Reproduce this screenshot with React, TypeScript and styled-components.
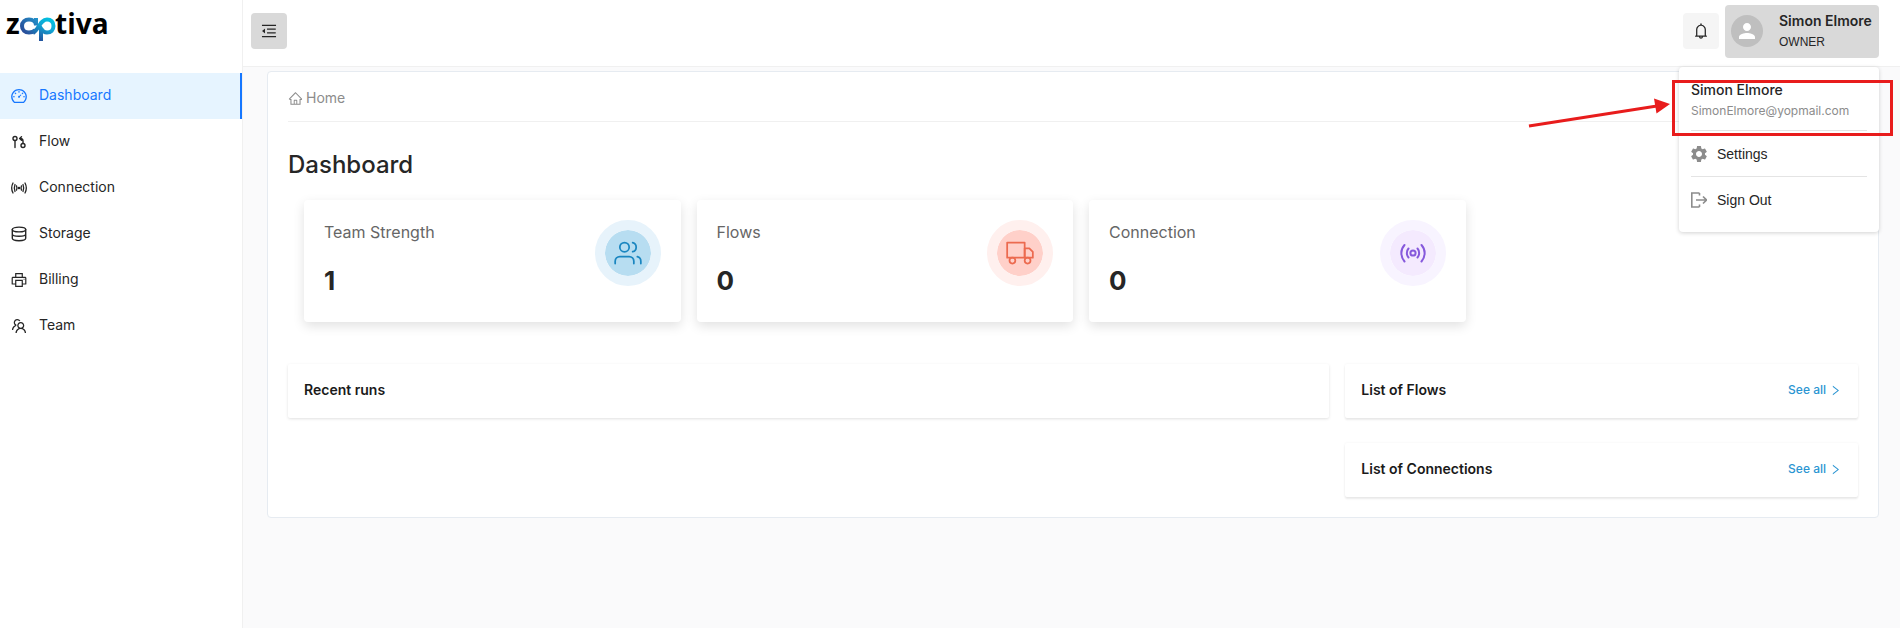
import React from 'react';
import styled, { createGlobalStyle, css } from 'styled-components';
import {
  AiOutlineBell,
  AiOutlineDashboard,
  AiOutlineHome,
  AiOutlineMenuFold,
  AiOutlinePrinter,
  AiOutlineRight,
  AiOutlineTeam,
} from 'react-icons/ai';
import { FiTruck, FiUsers } from 'react-icons/fi';
import { MdPerson, MdSettings } from 'react-icons/md';

const sans = `Inter, 'Liberation Sans', sans-serif`;
const arial = `'Liberation Sans', Arial, sans-serif`;

const GlobalStyle = createGlobalStyle`
  *, *::before, *::after { box-sizing: border-box; }
  body { margin: 0; background: #fafafb; color: #262626; font: 14px/22px ${sans}; }
  h1, h2, p, ul { margin: 0; padding: 0; }
  ul { list-style: none; }
  a { color: inherit; text-decoration: none; }
  button { font: inherit; color: inherit; border: 0; padding: 0; cursor: pointer; }
  svg { display: block; flex: none; }
`;

const Page = styled.div`
  display: flex;
  min-height: 100vh;
`;

const Sidebar = styled.aside`
  flex: none;
  width: 243px;
  background: #fff;
  border-right: 1px solid #f0f0f0;
`;

const Brand = styled.a`
  display: block;
  height: 73px;
`;

const NavLink = styled.a<{ $active?: boolean }>`
  display: flex;
  align-items: center;
  gap: 12px;
  height: 46px;
  padding-left: 11px;
  ${({ $active }) =>
    $active &&
    css`
      color: #1677ff;
      background: #e6f4ff;
      border-right: 2px solid #1677ff;
    `}
`;

const IconSlot = styled.span`
  display: flex;
  align-items: center;
  justify-content: center;
  flex: none;
  width: 16px;
  height: 16px;
`;

const NavText = styled.span`
  padding-bottom: 2px;
`;

const Body = styled.div`
  flex: 1;
  min-width: 0;
`;

const Header = styled.header`
  display: flex;
  align-items: flex-start;
  justify-content: space-between;
  height: 67px;
  padding: 5px 21px 0 8px;
  background: #fff;
  border-bottom: 1px solid #f0f0f0;
`;

const HeaderTools = styled.div`
  display: flex;
  gap: 6px;
`;

const IconButton = styled.button<{ $tone: string }>`
  display: flex;
  align-items: center;
  justify-content: center;
  width: 36px;
  height: 36px;
  margin-top: 8px;
  border-radius: 4px;
  background: ${({ $tone }) => $tone};
`;

const Account = styled.div`
  position: relative;
`;

const ProfileButton = styled.button`
  display: flex;
  align-items: center;
  gap: 16px;
  width: 154px;
  height: 53px;
  padding: 0 6px 1px;
  border-radius: 4px;
  background: #d9d9d9;
  text-align: left;
  white-space: nowrap;
`;

const Avatar = styled.span`
  display: flex;
  align-items: center;
  justify-content: center;
  width: 32px;
  height: 32px;
  border-radius: 50%;
  background: #bfbfbf;
  color: #fff;
`;

const ProfileText = styled.span`
  display: flex;
  flex-direction: column;
  gap: 1px;
`;

const ProfileName = styled.strong`
  font: 600 14px/20px ${sans};
`;

const ProfileRole = styled.span`
  font: 12px/20px ${arial};
`;

const Menu = styled.div`
  position: absolute;
  z-index: 2;
  top: 62px;
  right: 0;
  width: 200px;
  height: 165px;
  padding: 12px;
  background: #fff;
  border-radius: 4px;
  box-shadow: 0 1px 4px rgba(0, 0, 0, 0.18);
`;

const MenuUser = styled.div`
  height: 51px;
`;

const MenuName = styled.p`
  font-weight: 500;
  line-height: 22px;
`;

const MenuMail = styled.p`
  font-size: 12px;
  line-height: 20px;
  color: #8c8c8c;
`;

const MenuItem = styled.button`
  display: flex;
  align-items: center;
  gap: 10px;
  width: 100%;
  height: 46px;
  background: none;
  border-top: 1px solid #e4e4e4;
  font: 14px/22px ${arial};

  svg {
    color: #8c8c8c;
  }
`;

const Callout = styled.svg`
  position: absolute;
  z-index: 3;
  top: 70px;
  right: -16px;
  pointer-events: none;
`;

const Main = styled.main`
  padding: 4px 21px 0 24px;
`;

const Panel = styled.section`
  padding: 0 20px 20px;
  background: #fff;
  border: 1px solid #e6ebf1;
  border-radius: 4px;
`;

const Breadcrumb = styled.nav`
  display: flex;
  height: 50px;
  padding-top: 3px;
  border-bottom: 1px solid #f0f0f0;
  color: #8c8c8c;

  a {
    display: flex;
    align-items: center;
    gap: 3px;
  }
`;

const Title = styled.h1`
  padding: 27px 0 19px;
  font-size: 24px;
  line-height: 32px;
  font-weight: 500;
`;

const Stats = styled.div`
  display: grid;
  grid-template-columns: repeat(4, minmax(0, 1fr));
  gap: 16px;
  padding-left: 16px;
`;

const StatCard = styled.article`
  display: flex;
  justify-content: space-between;
  align-items: flex-start;
  height: 122px;
  padding: 20px;
  background: #fff;
  border-radius: 4px;
  box-shadow: 0 4px 12px rgba(0, 0, 0, 0.12);
`;

const StatLabel = styled.h2`
  font-size: 16px;
  line-height: 24px;
  font-weight: 400;
  color: #666;
`;

const StatValue = styled.p`
  margin-top: 21px;
  font-size: 26px;
  line-height: 32px;
  font-weight: 700;
`;

const StatIcon = styled.span<{ $ring: string; $fill: string; $ink: string }>`
  display: flex;
  align-items: center;
  justify-content: center;
  width: 66px;
  height: 66px;
  border: 10px solid ${({ $ring }) => $ring};
  border-radius: 50%;
  background: ${({ $fill }) => $fill};
  background-clip: padding-box;
  color: ${({ $ink }) => $ink};
`;

const Lists = styled.div`
  display: grid;
  grid-template-columns: repeat(3, minmax(0, 1fr));
  gap: 16px;
  align-items: start;
  margin-top: 42px;
`;

const WideColumn = styled.div`
  grid-column: span 2;
`;

const Column = styled.div`
  display: flex;
  flex-direction: column;
  gap: 25px;
`;

const ListCard = styled.section<{ $raised?: boolean }>`
  display: flex;
  align-items: center;
  justify-content: space-between;
  height: 54px;
  padding: 0 16px 2px;
  background: #fff;
  border-radius: 2px;
  box-shadow: ${({ $raised }) =>
    $raised
      ? '0 2px 2px rgba(0, 0, 0, 0.08), 0 0 3px rgba(0, 0, 0, 0.05)'
      : '0 1px 3px rgba(0, 0, 0, 0.12)'};
`;

const ListTitle = styled.h2`
  font-size: 14px;
  line-height: 22px;
  font-weight: 600;
  color: #1a1a1a;
`;

const SeeAll = styled.a`
  display: flex;
  align-items: center;
  gap: 3px;
  font-size: 12px;
  line-height: 20px;
  font-weight: 500;
  color: #2b95d2;
`;

const stroke = {
  fill: 'none',
  stroke: 'currentColor',
  strokeLinecap: 'round' as const,
  strokeLinejoin: 'round' as const,
};

const Logo = () => (
  <svg width="120" height="48" role="img" aria-label="zaptiva">
    <defs>
      <linearGradient id="loopA" x1="20" y1="34" x2="38" y2="18" gradientUnits="userSpaceOnUse">
        <stop offset="0" stopColor="#2a3f8f" />
        <stop offset="1" stopColor="#2295cc" />
      </linearGradient>
      <linearGradient id="loopP" x1="38" y1="40" x2="50" y2="18" gradientUnits="userSpaceOnUse">
        <stop offset="0" stopColor="#24509c" />
        <stop offset="0.6" stopColor="#12a5d4" />
        <stop offset="1" stopColor="#00c2e0" />
      </linearGradient>
    </defs>
    <g fontFamily="'Open Sans', sans-serif" fontWeight="700" fontSize="28" fill="#000">
      <text x="6" y="34">z</text>
      <text x="55" y="34">tiva</text>
    </g>
    <g fill="none" strokeWidth="4">
      <path d="M35.500 30C33.500 31.800 31.500 32.500 29 32.500C25 32.500 22 30 22 26C22 22 25 19.500 29 19.500C33 19.500 36 22 36 25.500V18" stroke="url(#loopA)" />
      <path d="M33 33C39 29.500 40 19.500 47 19.500C51 19.500 53.500 22 53.500 26C53.500 30 51 32.500 47 32.500C44.500 32.500 42.500 31 41 28.500V41" stroke="url(#loopP)" />
    </g>
  </svg>
);

const FlowIcon = () => (
  <svg width="16" height="16" viewBox="0 0 16 16" {...stroke} strokeWidth="1.400">
    <circle cx="4" cy="4.500" r="2" />
    <path d="M4 6.500V13.500" />
    <circle cx="12" cy="11.500" r="2" />
    <path d="M12 9.500V7C12 5 11 4.500 9 4.500M10.500 2.800L8.600 4.500L10.500 6.200" />
  </svg>
);

const SignalIcon = () => (
  <svg width="16" height="16" viewBox="0 0 16 16" {...stroke} strokeWidth="1.300">
    <circle cx="8" cy="8" r="0.700" fill="currentColor" />
    <path d="M5.500 5.800C6.100 7.200 6.100 8.800 5.500 10.200M10.500 5.800C9.900 7.200 9.900 8.800 10.500 10.200" />
    <path d="M4 4.500C3.100 6.800 3.100 9.200 4 11.500M12 4.500C12.900 6.800 12.900 9.200 12 11.500" />
    <path d="M2 3C0.300 6.200 0.300 9.800 2 13M14 3C15.700 6.200 15.700 9.800 14 13" />
  </svg>
);

const StorageIcon = () => (
  <svg width="16" height="16" viewBox="0 0 16 16" {...stroke} strokeWidth="1.400">
    <ellipse cx="8" cy="3.500" rx="6.700" ry="2.400" />
    <path d="M1.300 3.500V12.300C1.300 15.500 14.700 15.500 14.700 12.300V3.500M1.300 7.900C1.300 11 14.700 11 14.700 7.900" />
  </svg>
);

const RadioIcon = () => (
  <svg width="28" height="28" viewBox="0 0 28 28" {...stroke} strokeWidth="2">
    <circle cx="14" cy="14" r="2.600" />
    <path d="M9.500 9.500C7.300 12 7.300 16 9.500 18.500M18.500 9.500C20.700 12 20.700 16 18.500 18.500" />
    <path d="M5.500 6C1.300 10.500 1.300 17.500 5.500 22.500M22.500 6C26.700 10.500 26.700 17.500 22.500 22.500" />
  </svg>
);

const SignOutIcon = () => (
  <svg width="16" height="16" viewBox="0 0 16 16" fill="none" stroke="currentColor" strokeWidth="1.600">
    <path d="M8.500 1H0.800V15H8.500M8.500 1V3.500M8.500 15V12.500" />
    <path d="M5 8H15.500M12 4.500L15.500 8L12 11.500" />
  </svg>
);

const navigation = [
  { label: 'Dashboard', icon: <AiOutlineDashboard size={18} />, active: true },
  { label: 'Flow', icon: <FlowIcon /> },
  { label: 'Connection', icon: <SignalIcon /> },
  { label: 'Storage', icon: <StorageIcon /> },
  { label: 'Billing', icon: <AiOutlinePrinter size={18} /> },
  { label: 'Team', icon: <AiOutlineTeam size={18} /> },
];

const stats = [
  { label: 'Team Strength', value: 1, icon: <FiUsers size={28} strokeWidth={1.5} />, ring: '#e7f3fb', fill: '#b7ddf1', ink: '#1a86c0' },
  { label: 'Flows', value: 0, icon: <FiTruck size={28} strokeWidth={1.5} />, ring: '#fff0ee', fill: '#ffd0c9', ink: '#ec6a4f' },
  { label: 'Connection', value: 0, icon: <RadioIcon />, ring: '#f8f4ff', fill: '#f4eafe', ink: '#8659dc' },
];

export default function App() {
  return (
    <Page>
      <GlobalStyle />
      <Sidebar>
        <Brand href="#home">
          <Logo />
        </Brand>
        <nav aria-label="Main">
          <ul>
            {navigation.map(({ label, icon, active }) => (
              <li key={label}>
                <NavLink href={`#${label.toLowerCase()}`} $active={active}>
                  <IconSlot>{icon}</IconSlot>
                  <NavText>{label}</NavText>
                </NavLink>
              </li>
            ))}
          </ul>
        </nav>
      </Sidebar>

      <Body>
        <Header>
          <IconButton $tone="#d9d9d9" aria-label="Collapse menu">
            <AiOutlineMenuFold size={18} />
          </IconButton>
          <HeaderTools>
            <IconButton $tone="#f5f5f5" aria-label="Notifications">
              <AiOutlineBell size={18} />
            </IconButton>
            <Account>
              <ProfileButton aria-expanded="true">
                <Avatar>
                  <MdPerson size={24} />
                </Avatar>
                <ProfileText>
                  <ProfileName>Simon Elmore</ProfileName>
                  <ProfileRole>OWNER</ProfileRole>
                </ProfileText>
              </ProfileButton>
              <Menu>
                <MenuUser>
                  <MenuName>Simon Elmore</MenuName>
                  <MenuMail>SimonElmore@yopmail.com</MenuMail>
                </MenuUser>
                <MenuItem>
                  <IconSlot>
                    <MdSettings size={20} />
                  </IconSlot>
                  Settings
                </MenuItem>
                <MenuItem>
                  <IconSlot>
                    <SignOutIcon />
                  </IconSlot>
                  Sign Out
                </MenuItem>
              </Menu>
              <Callout width="368" height="66" aria-hidden="true">
                <rect x="146.500" y="6.500" width="218" height="53" fill="none" stroke="#e81c1c" strokeWidth="3" />
                <path d="M2 51L130 31" stroke="#e81c1c" strokeWidth="3" />
                <path d="M127 23.500L143 29L129.500 38.500Z" fill="#e81c1c" />
              </Callout>
            </Account>
          </HeaderTools>
        </Header>

        <Main>
          <Panel>
            <Breadcrumb aria-label="Breadcrumb">
              <a href="#home">
                <AiOutlineHome size={15} />
                Home
              </a>
            </Breadcrumb>
            <Title>Dashboard</Title>
            <Stats>
              {stats.map(({ label, value, icon, ring, fill, ink }) => (
                <StatCard key={label}>
                  <div>
                    <StatLabel>{label}</StatLabel>
                    <StatValue>{value}</StatValue>
                  </div>
                  <StatIcon $ring={ring} $fill={fill} $ink={ink}>
                    {icon}
                  </StatIcon>
                </StatCard>
              ))}
            </Stats>
            <Lists>
              <WideColumn>
                <ListCard>
                  <ListTitle>Recent runs</ListTitle>
                </ListCard>
              </WideColumn>
              <Column>
                {['List of Flows', 'List of Connections'].map((title) => (
                  <ListCard key={title} $raised>
                    <ListTitle>{title}</ListTitle>
                    <SeeAll href="#all">
                      See all
                      <AiOutlineRight size={13} />
                    </SeeAll>
                  </ListCard>
                ))}
              </Column>
            </Lists>
          </Panel>
        </Main>
      </Body>
    </Page>
  );
}
